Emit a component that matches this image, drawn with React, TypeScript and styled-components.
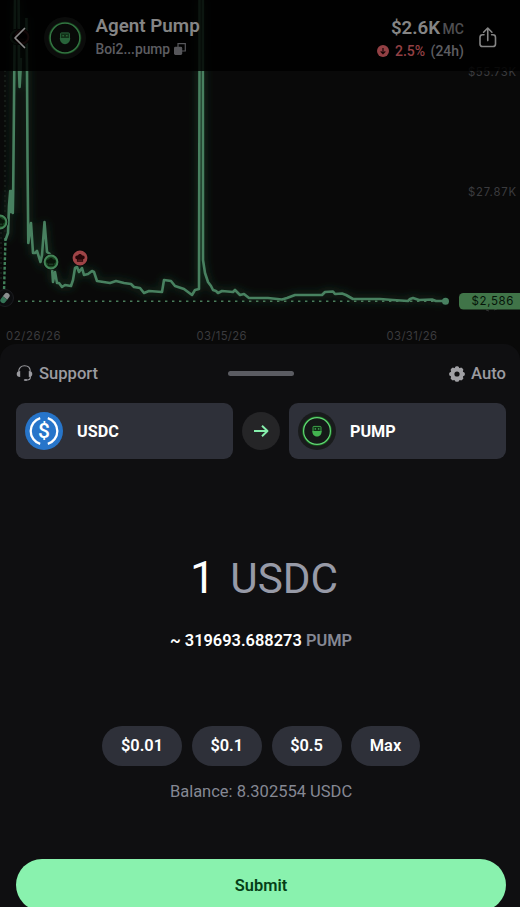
import React from 'react';
import styled, { createGlobalStyle } from 'styled-components';

const GlobalStyle = createGlobalStyle`
    * {
        box-sizing: border-box;
    }

    body {
        margin: 0;
        background: #090909;
        font-family: Roboto, 'Liberation Sans', sans-serif;
        overflow: hidden;
    }

    button {
        border: 0;
        padding: 0;
        font: inherit;
        color: inherit;
        background: none;
    }

    svg {
        display: block;
        flex-shrink: 0;
    }
`;

interface Marker {
    x: number;
    y: number;
    color: string;
    dark: string;
    hat: string;
}

const MARKERS: Marker[] = [
    { x: 17, y: 37, color: '#2c5536', dark: '#0b160d', hat: '#060906' },
    { x: 22, y: 37, color: '#70302f', dark: '#1c0809', hat: '#060303' },
    { x: 0, y: 222, color: '#438457', dark: '#17431f', hat: '#081409' },
    { x: 51, y: 262, color: '#438457', dark: '#17431f', hat: '#081409' },
    { x: 80, y: 258, color: '#a04447', dark: '#a04447', hat: '#260507' },
];

const PRICE_LINE =
    'M5.5 240L8 233L9 206L10.2 191L11 212L11.8 191L12.8 213L13.2 190L14.3 70L15 0 ' +
    'M18.6 0L19 70L19.6 87L20.6 70L20.8 58 ' +
    'M26.4 18L27 70L27.5 160L28.3 243L31 223L33 253L35 253L37 251L40.5 262L42 255L44.5 222L47 252L50 254 ' +
    'L52 268L53 282L55 272L57 283L59 283L62 287L65 285L71 286L73 280L75 268L77 267L79 272L82 268 ' +
    'L84 275L88 274L92 271L94 272L97 281L110 283L116 281L124 283L131 284L134 287L140 288L144 293 ' +
    'L149 291L162 292L164 280L171 281L175 286L184 289L192 295L195 290L199 289L199.5 70L199.5 0 ' +
    'M202.8 0L203 260L205 273L208 282L211 286L213 290L216 291L218 293L222 291L233 292 ' +
    'L235 290L240 295L244 294L249 298L268 298L282 299.5L287 298L295 295L322 295L325 292L333 291.5 ' +
    'L335 294L342 293.5L346 295L353 299L380 299L393 300L408 301L410 299L413 298L419 300L432 299.5L436 301L445 301';

function ChartMarker({ x, y, color, dark, hat }: Marker) {
    return (
        <g transform={`translate(${x} ${y})`}>
            <circle r="8.2" fill="#090909" />
            <circle r="6.4" fill={dark} stroke={color} strokeWidth="2" />
            <path
                d="M-3.1 3.8V1.3C-5.8 .6-4.8-3-2.4-2.4-1.2-4.6 1.2-4.6 2.4-2.4 4.8-3 5.8.6 3.1 1.3V3.8Z"
                fill={hat}
            />
            <path d="M-2.4 2.2H2.4" stroke={color} strokeOpacity=".6" strokeWidth=".8" />
        </g>
    );
}

function PriceChart() {
    return (
        <svg width="520" height="354" viewBox="0 0 520 354">
            <defs>
                <filter id="glow" x="-10%" y="-10%" width="120%" height="120%">
                    <feGaussianBlur stdDeviation="4" />
                </filter>
            </defs>
            <path
                d={PRICE_LINE}
                fill="none"
                stroke="#2b6d43"
                strokeOpacity=".35"
                strokeWidth="5"
                filter="url(#glow)"
            />
            <path
                d="M5 70V232M1 232V282"
                stroke="#1c231e"
                strokeWidth="1.4"
                strokeDasharray="2 3"
            />
            <path
                d="M5.5 238L4 292"
                stroke="#41805a"
                strokeWidth="2.4"
                strokeDasharray="3 1.8"
            />
            <path
                d="M18 301.2H445"
                stroke="#4a7d5b"
                strokeWidth="1.4"
                strokeDasharray="2.4 4.6"
            />
            <path
                d={PRICE_LINE}
                fill="none"
                stroke="#488160"
                strokeWidth="2.6"
                strokeLinejoin="round"
            />
            <circle cx="445.5" cy="301.2" r="3.5" fill="#488160" />
            {MARKERS.map(marker => (
                <ChartMarker key={`${marker.x}-${marker.y}`} {...marker} />
            ))}
            <circle cx="5" cy="298" r="8.5" fill="#0c0d0f" stroke="#1b1c20" />
            <g transform="translate(5 298) rotate(38)">
                <path d="M-2.8 0V-3A2.8 2.8 0 0 1 2.8-3V0Z" fill="#8b8f90" />
                <path d="M-2.8 0V3A2.8 2.8 0 0 0 2.8 3V0Z" fill="#357457" />
            </g>
            <g fontFamily="Inter, sans-serif" fontSize="11.3" fill="#3b3b3e">
                <text x="468" y="76" textLength="48">$55.73K</text>
                <text x="468" y="196" textLength="48">$27.87K</text>
                <text x="6" y="340" textLength="54.5">02/26/26</text>
                <text x="196.5" y="340" textLength="50">03/15/26</text>
                <text x="386.5" y="340" textLength="50.5">03/31/26</text>
            </g>
            <path d="M486 310l3 1M494 310l3-1" stroke="#303032" />
            <rect x="459" y="293" width="70" height="16.5" rx="4.5" fill="#407448" />
            <text
                x="471.5"
                y="305.3"
                textLength="42"
                fontFamily="Inter, sans-serif"
                fontSize="11.5"
                fill="#061409"
            >
                $2,586
            </text>
        </svg>
    );
}

function BotLogo({ size, dim }: { size: number; dim?: boolean }) {
    const ring = dim ? '#347843' : '#62d675';
    const glow = dim ? '#173c1d' : '#17691f';
    const body = dim ? '#28643a' : '#42b34f';
    return (
        <svg width={size} height={size} viewBox="0 0 38 38">
            <circle cx="19" cy="19" r="19" fill={dim ? '#0b0c0b' : '#191b1c'} />
            <circle cx="19" cy="19" r="13.4" fill="none" stroke={glow} strokeWidth="2.8" />
            <circle cx="19" cy="19" r="13.4" fill={dim ? '#080a08' : '#151918'} stroke={ring} strokeWidth="1.2" />
            <rect x="15" y="14.4" width="8" height="5.4" rx=".8" fill="#123018" stroke={body} strokeWidth=".9" />
            <circle cx="17.3" cy="16.9" r=".7" fill={ring} />
            <circle cx="20.7" cy="16.9" r=".7" fill={ring} />
            <path d="M14.3 19H23.7C23.7 26.4 14.3 26.4 14.3 19Z" fill={body} />
        </svg>
    );
}

function UsdcLogo() {
    return (
        <svg width="38" height="38" viewBox="0 0 38 38">
            <circle cx="19" cy="19" r="19" fill="#2775ca" />
            <path
                d="M15.2 6.1A13.5 13.5 0 0 0 15.2 31.9M22.8 6.1A13.5 13.5 0 0 1 22.8 31.9"
                fill="none"
                stroke="#fff"
                strokeWidth="2.3"
            />
            <text
                x="19"
                y="26.4"
                textAnchor="middle"
                fontFamily="Roboto, sans-serif"
                fontSize="21"
                fontWeight="500"
                fill="#fff"
            >
                $
            </text>
        </svg>
    );
}

export default function App() {
    return (
        <Screen>
            <GlobalStyle />
            <ChartArea>
                <PriceChart />
                <TokenHeader>
                    <BackButton aria-label="Back">
                        <svg width="14" height="22" viewBox="0 0 14 22">
                            <path
                                d="M11.5 1.5L2 11L11.5 20.5"
                                fill="none"
                                stroke="#898989"
                                strokeWidth="1.7"
                                strokeLinecap="round"
                                strokeLinejoin="round"
                            />
                        </svg>
                    </BackButton>
                    <BotLogo size={42} dim />
                    <TokenInfo>
                        <TokenName>Agent Pump</TokenName>
                        <TokenAddress>
                            Boi2...pump
                            <svg width="12" height="12" viewBox="0 0 12 12">
                                <path d="M4 4V.7H11.3V8H8" fill="none" stroke="#56565a" strokeWidth="1.2" />
                                <rect y="3.8" width="8.2" height="8.2" rx="1.4" fill="#56565a" />
                            </svg>
                        </TokenAddress>
                    </TokenInfo>
                    <MarketInfo>
                        <MarketCap>
                            $2.6K<span>MC</span>
                        </MarketCap>
                        <PriceChange>
                            <svg width="12" height="12" viewBox="0 0 12 12">
                                <circle cx="6" cy="6" r="6" fill="#934044" />
                                <path d="M6 3V8.6M3.7 6.4L6 8.7L8.3 6.4" fill="none" stroke="#160405" strokeWidth="1.2" />
                            </svg>
                            <Percent>2.5%</Percent>
                            (24h)
                        </PriceChange>
                    </MarketInfo>
                    <svg width="18" height="21" viewBox="0 0 18 21">
                        <path
                            d="M5 7.8H3.6Q1 7.8 1 10.4V16.9Q1 19.5 3.6 19.5H13.9Q16.5 19.5 16.5 16.9V10.4Q16.5 7.8 13.9 7.8H12.6M8.75 13.6V1.2M4.6 5.2L8.75 1L12.9 5.2"
                            fill="none"
                            stroke="#858585"
                            strokeWidth="1.6"
                            strokeLinecap="round"
                            strokeLinejoin="round"
                        />
                    </svg>
                </TokenHeader>
            </ChartArea>

            <Sheet>
                <SheetHeader>
                    <SheetAction>
                        <svg width="17" height="17" viewBox="0 0 17 17">
                            <path
                                d="M2.7 6.5C2.7 3 5 .8 8.5 .8S14.3 3 14.3 6.5M14.3 11V12.5C14.3 14.4 12.8 15 11.2 15H9"
                                fill="none"
                                stroke="#9b9ba0"
                                strokeWidth="1.1"
                            />
                            <path
                                d="M4.2 6V12C1.8 12 .7 11 .7 9S1.8 6 4.2 6ZM12.8 6V12C15.2 12 16.3 11 16.3 9S15.2 6 12.8 6Z"
                                fill="#9b9ba0"
                            />
                            <rect x="7.8" y="14.2" width="3.4" height="1.6" rx=".8" fill="#9b9ba0" />
                        </svg>
                        Support
                    </SheetAction>
                    <Handle />
                    <SheetAction $end>
                        <svg width="16" height="16" viewBox="-8 -8 16 16">
                            <circle r="4.6" fill="none" stroke="#a0a0a4" strokeWidth="4" />
                            {[0, 45, 90, 135, 180, 225, 270, 315].map(angle => (
                                <rect
                                    key={angle}
                                    x="-2.1"
                                    y="-7.8"
                                    width="4.2"
                                    height="4"
                                    rx="1.6"
                                    fill="#a0a0a4"
                                    transform={`rotate(${angle})`}
                                />
                            ))}
                        </svg>
                        Auto
                    </SheetAction>
                </SheetHeader>

                <SwapRow>
                    <TokenButton>
                        <UsdcLogo />
                        USDC
                    </TokenButton>
                    <SwapArrow aria-label="Switch tokens">
                        <svg width="16" height="14" viewBox="0 0 16 14">
                            <path
                                d="M1 7H14.5M9 1.7L14.5 7L9 12.3"
                                fill="none"
                                stroke="#86efac"
                                strokeWidth="1.9"
                                strokeLinejoin="round"
                            />
                        </svg>
                    </SwapArrow>
                    <TokenButton>
                        <BotLogo size={38} />
                        PUMP
                    </TokenButton>
                </SwapRow>

                <Amount>
                    <AmountValue>1</AmountValue>
                    <AmountUnit>USDC</AmountUnit>
                </Amount>
                <Estimate>
                    ~ 319693.688273 <span>PUMP</span>
                </Estimate>

                <Presets>
                    <Preset $width={80}>$0.01</Preset>
                    <Preset $width={70.5}>$0.1</Preset>
                    <Preset $width={70}>$0.5</Preset>
                    <Preset $width={69}>Max</Preset>
                </Presets>
                <Balance>Balance: 8.302554 USDC</Balance>

                <SubmitButton>Submit</SubmitButton>
            </Sheet>
        </Screen>
    );
}

const Screen = styled.main`
    width: 520px;
    height: 907px;
    display: flex;
    flex-direction: column;
    background: #090909;
    overflow: hidden;
`;

const ChartArea = styled.section`
    position: relative;
    height: 344px;
    flex-shrink: 0;
`;

const TokenHeader = styled.header`
    position: absolute;
    inset: 0 0 auto;
    height: 70.5px;
    padding: 5px 23px 0 13px;
    display: flex;
    align-items: center;
    background: rgba(0, 0, 0, 0.83);
`;

const BackButton = styled.button`
    width: 31px;
    flex-shrink: 0;
`;

const TokenInfo = styled.div`
    flex: 1;
    padding-left: 9.5px;
    padding-bottom: 1px;
`;

const TokenName = styled.div`
    font-size: 18.8px;
    font-weight: 600;
    line-height: 24px;
    color: #858585;
`;

const TokenAddress = styled.div`
    display: flex;
    align-items: center;
    gap: 4px;
    font-size: 13.8px;
    font-weight: 500;
    line-height: 22px;
    color: #5d5d61;
`;

const MarketInfo = styled.div`
    display: flex;
    flex-direction: column;
    align-items: flex-end;
    margin-right: 15px;
    padding-top: 2px;
`;

const MarketCap = styled.div`
    font-size: 18.7px;
    font-weight: 600;
    line-height: 24px;
    color: #858585;

    span {
        margin-left: 2.5px;
        font-size: 14px;
        font-weight: 500;
        color: #4f4f52;
    }
`;

const PriceChange = styled.div`
    display: flex;
    align-items: center;
    font-size: 14px;
    font-weight: 500;
    line-height: 20px;
    color: #5d5d61;
`;

const Percent = styled.span`
    margin: 0 5.5px;
    color: #934044;
`;

const Sheet = styled.section`
    position: relative;
    flex: 1;
    padding: 14px 14px 0 16px;
    display: flex;
    flex-direction: column;
    border-radius: 16px 16px 0 0;
    background: #0f0f11;
`;

const SheetHeader = styled.div`
    display: grid;
    grid-template-columns: 1fr 66px 1fr;
    align-items: center;
    height: 31px;
`;

const SheetAction = styled.button<{ $end?: boolean }>`
    display: flex;
    align-items: center;
    justify-content: ${({ $end }) => ($end ? 'flex-end' : 'flex-start')};
    gap: 6px;
    font-size: 16.6px;
    font-weight: 500;
    line-height: 31px;
    color: #9b9ba0;
`;

const Handle = styled.div`
    height: 5px;
    border-radius: 3px;
    background: #5b5c62;
`;

const SwapRow = styled.div`
    display: grid;
    grid-template-columns: 1fr 38px 1fr;
    align-items: center;
    gap: 9px;
    margin-top: 14px;
`;

const TokenButton = styled.button`
    display: flex;
    align-items: center;
    gap: 14px;
    height: 56px;
    padding-left: 9px;
    border-radius: 9px;
    background: #2e3039;
    color: #fff;
    font-size: 16.2px;
    font-weight: 700;
`;

const SwapArrow = styled.button`
    display: flex;
    align-items: center;
    justify-content: center;
    height: 38px;
    border-radius: 50%;
    background: #252527;
`;

const Amount = styled.div`
    display: flex;
    align-items: baseline;
    justify-content: center;
    gap: 15px;
    height: 54px;
    margin: 92px 0 0 6px;
    line-height: 54px;
`;

const AmountValue = styled.span`
    font-size: 45px;
    font-weight: 400;
    color: #fff;
`;

const AmountUnit = styled.span`
    font-size: 42.3px;
    font-weight: 400;
    color: #979aa7;
`;

const Estimate = styled.div`
    margin-top: 22px;
    text-align: center;
    font-size: 16.4px;
    font-weight: 600;
    line-height: 28px;
    color: #fff;

    span {
        color: #858894;
    }
`;

const Presets = styled.div`
    display: flex;
    justify-content: center;
    gap: 9.5px;
    margin-top: 70.5px;
`;

const Preset = styled.button<{ $width: number }>`
    width: ${({ $width }) => $width}px;
    height: 40px;
    border-radius: 20px;
    background: #2e3039;
    color: #fff;
    font-size: 16.4px;
    font-weight: 600;
`;

const Balance = styled.div`
    margin-top: 14.5px;
    text-align: center;
    font-size: 16.5px;
    line-height: 24px;
    color: #858894;
`;

const SubmitButton = styled.button`
    flex-shrink: 0;
    height: 52px;
    margin-top: 55px;
    border-radius: 26px;
    background: #89f2ae;
    color: #053f17;
    font-size: 16.4px;
    font-weight: 600;
`;
